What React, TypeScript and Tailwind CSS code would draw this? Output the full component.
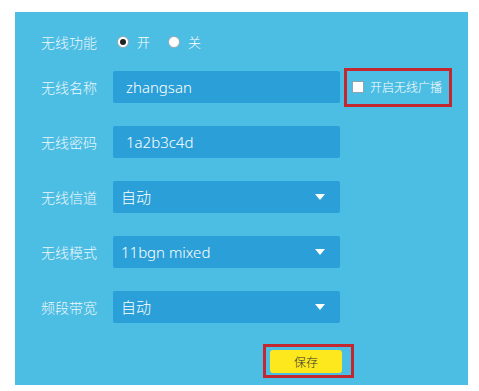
const cjk = '"Noto Sans CJK SC", "Noto Sans", sans-serif';
const latin = '"Noto Sans", "Noto Sans CJK SC", sans-serif';

const Label = ({ text }: { text: string }) => (
  <div className="w-[72px] shrink-0 text-[14px] font-light text-[#eef8fd]" style={{ fontFamily: cjk }}>
    {text}
  </div>
);

const Caret = () => (
  <svg width="10" height="6" viewBox="0 0 10 6" className="ml-auto mr-[15px]">
    <path d="M0 0 L10 0 L5 6 Z" fill="#ffffff" />
  </svg>
);

const Radio = ({ checked, label }: { checked: boolean; label: string }) => (
  <div className="flex items-center">
    <span className="flex h-[12px] w-[12px] items-center justify-center rounded-full border border-[#9aa9b0] bg-white">
      {checked && <span className="h-[6px] w-[6px] rounded-full bg-[#222]" />}
    </span>
    <span className="ml-[8px] text-[13px] font-light text-white" style={{ fontFamily: cjk }}>
      {label}
    </span>
  </div>
);

const SelectRow = ({ label, value }: { label: string; value: string }) => (
  <div className="mt-[23px] flex h-[32px] items-center">
    <Label text={label} />
    <div className="flex h-[32px] w-[227px] items-center rounded-[2px] bg-[#2a9fd8] pl-[8px]">
      <span className="text-[15px] font-light text-white" style={{ fontFamily: latin }}>
        {value}
      </span>
      <Caret />
    </div>
  </div>
);

const InputRow = ({ label, value, extra }: { label: string; value: string; extra?: React.ReactNode }) => (
  <div className="flex h-[32px] items-center">
    <Label text={label} />
    <div className="flex h-[32px] w-[227px] items-center rounded-[2px] bg-[#2a9fd8] pl-[13px]">
      <span className="text-[15px] font-light text-white" style={{ fontFamily: latin }}>
        {value}
      </span>
    </div>
    {extra}
  </div>
);

export default function App() {
  return (
    <div className="h-[391px] w-[479px] bg-white pl-[15px] pt-[12px]">
      <div className="h-[373px] w-[453px] bg-[#4cbde3] pl-[26px] pt-[14px]">
        <div className="flex h-[32px] items-center">
          <Label text="无线功能" />
          <div className="ml-[4px] flex items-center gap-[18px]">
            <Radio checked label="开" />
            <Radio checked={false} label="关" />
          </div>
        </div>

        <div className="mt-[13px]">
          <InputRow
            label="无线名称"
            value="zhangsan"
            extra={
              <div className="ml-[4px] flex h-[39px] w-[108px] items-center border-[3px] border-[#c3272f] pl-[5px]">
                <span className="h-[12px] w-[12px] border border-[#8aa4b0] bg-white" />
                <span className="ml-[6px] text-[12px] font-light text-white" style={{ fontFamily: cjk }}>
                  开启无线广播
                </span>
              </div>
            }
          />
        </div>

        <div className="mt-[23px]">
          <InputRow label="无线密码" value="1a2b3c4d" />
        </div>

        <SelectRow label="无线信道" value="自动" />
        <SelectRow label="无线模式" value="11bgn mixed" />
        <SelectRow label="频段带宽" value="自动" />

        <div className="ml-[222px] mt-[21px] flex">
          <div className="border-[3px] border-[#c3272f] pb-[2px] pl-[4px] pr-[9px] pt-[3px]">
            <button
              className="flex h-[23px] w-[72px] items-center justify-center rounded-[3px] bg-[#fce81c] text-[12px] font-light text-[#333]"
              style={{ fontFamily: cjk }}
            >
              保存
            </button>
          </div>
        </div>
      </div>
    </div>
  );
}
